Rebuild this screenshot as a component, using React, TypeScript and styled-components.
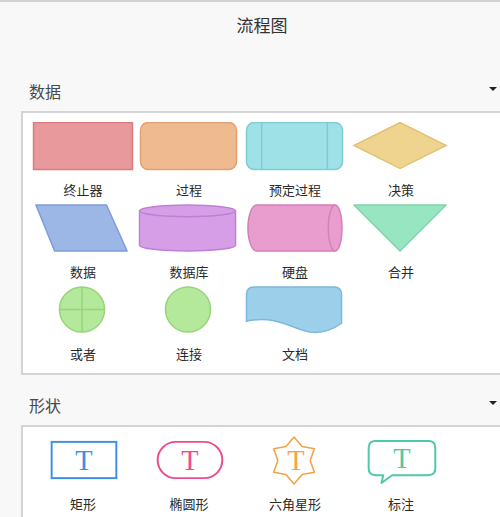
import React from 'react';
import styled, { createGlobalStyle } from 'styled-components';

const GlobalStyle = createGlobalStyle`
  html, body {
    margin: 0;
    padding: 0;
    background: #f8f8f8;
    overflow: hidden;
  }
`;

const Page = styled.div`
  width: 500px;
  border-top: 2px solid #d2d2d2;
  background: #f8f8f8;
  font-family: "Noto Sans CJK SC", "Noto Sans", sans-serif;
`;

// the window cuts the sidebar on the right, so the title sits a bit right of centre
const Title = styled.div`
  height: 56px;
  padding: 3px 0 0 24px;
  text-align: center;
  line-height: 40px;
  font-size: 17px;
  color: #333;
`;

const SectionHeader = styled.div`
  height: 50px;
  padding: 0 3px 9px 29px;
  display: flex;
  align-items: flex-end;
  justify-content: space-between;
  box-sizing: border-box;
`;

const SectionName = styled.span`
  font-size: 16px;
  line-height: 22px;
  color: #4a4a4a;
`;

const Caret = styled.span`
  width: 0;
  height: 0;
  border-left: 4px solid transparent;
  border-right: 4px solid transparent;
  border-top: 4px solid #222;
  margin-bottom: 11px;
`;

const Panel = styled.div<{ $pad: string }>`
  margin-left: 21px;
  background: #fff;
  border: 2px solid #d4d4d4;
  border-right: none;
  padding: ${(p) => p.$pad};
  display: grid;
  grid-template-columns: repeat(4, 106px);
`;

const Cell = styled.div`
  display: flex;
  flex-direction: column;
  align-items: center;
  height: 82px;
`;

const Label = styled.div`
  padding-top: 5px;
  line-height: 28px;
  font-size: 13px;
  color: #2a2a2a;
  text-align: center;
  width: 106px;
`;

const ShapeSvg = styled.svg`
  display: block;
  width: 106px;
  height: 50px;
`;

const TGlyph = styled.text`
  font-family: "Liberation Serif", "DejaVu Serif", serif;
  font-size: 29px;
`;

type Shape = { label: string; draw: React.ReactNode };

const sw = 1.5;

const flowShapes: Shape[] = [
  {
    label: '终止器',
    draw: <rect x={2.5} y={0.5} width={101} height={48} fill="#e8999b" stroke="#d97b7e" strokeWidth={sw} />,
  },
  {
    label: '过程',
    draw: <rect x={3.5} y={0.5} width={98} height={48} rx={8} fill="#f0ba90" stroke="#e2a172" strokeWidth={sw} />,
  },
  {
    label: '预定过程',
    draw: (
      <g fill="none" stroke="#7fcad3" strokeWidth={sw}>
        <rect x={3.5} y={0.5} width={98} height={48} rx={8} fill="#9ee2e8" />
        <line x1={19} y1={1} x2={19} y2={48} />
        <line x1={86} y1={1} x2={86} y2={48} />
      </g>
    ),
  },
  {
    label: '决策',
    draw: <path d="M52,0.5 L99,24 L52,47.5 L5,24 Z" fill="#efd48f" stroke="#e1c274" strokeWidth={sw} />,
  },
  {
    label: '数据',
    draw: (
      <path d="M5,1 H77 L98,48 H24 Z" fill="#9cb6e6" stroke="#7e9cd9" strokeWidth={sw} strokeLinejoin="round" />
    ),
  },
  {
    label: '数据库',
    draw: (
      <g stroke="#c07fd3" strokeWidth={sw} fill="#d59ee7">
        <path d="M2.5,7 A49,6 0 0 1 100.5,7 V42 A49,6 0 0 1 2.5,42 Z" />
        <path d="M2.5,7 A49,6 0 0 0 100.5,7" fill="none" />
      </g>
    ),
  },
  {
    label: '硬盘',
    draw: (
      <g stroke="#d47fb8" strokeWidth={sw} fill="#e99dcf">
        <path d="M14,1 H94 A7,23.5 0 0 1 94,48 H14 A9,23.5 0 0 1 14,1 Z" />
        <path d="M94,1 A7,23.5 0 0 0 94,48" fill="none" />
      </g>
    ),
  },
  {
    label: '合并',
    draw: (
      <path d="M5,1 H99 L52,48 Z" fill="#98e6c1" stroke="#80d4a9" strokeWidth={sw} strokeLinejoin="round" />
    ),
  },
  {
    label: '或者',
    draw: (
      <g stroke="#98d47c" strokeWidth={sw} fill="#b4e89b">
        <circle cx={52} cy={24} r={23} />
        <line x1={52} y1={1} x2={52} y2={47} />
        <line x1={29} y1={24} x2={75} y2={24} />
      </g>
    ),
  },
  {
    label: '连接',
    draw: <circle cx={52} cy={24} r={23} fill="#b4e89b" stroke="#98d47c" strokeWidth={sw} />,
  },
  {
    label: '文档',
    draw: (
      <path
        d="M3.5,9 Q3.5,1 11,1 H93 Q100.5,1 100.5,9 V38 C92,44 82,49 68,47 C50,44 34,29 3.5,36 Z"
        fill="#9ccfea"
        stroke="#7db7dc"
        strokeWidth={sw}
      />
    ),
  },
];

const starPoints = (() => {
  const pts: string[] = [];
  for (let i = 0; i < 12; i++) {
    const a = (-90 + i * 30) * (Math.PI / 180);
    const r = i % 2 === 0 ? 24 : 16.5;
    pts.push(`${(52 + r * Math.cos(a)).toFixed(2)},${(25 + r * Math.sin(a)).toFixed(2)}`);
  }
  return pts.join(' ');
})();

const basicShapes: { label: string; color: string; draw: React.ReactNode; ty: number }[] = [
  {
    label: '矩形',
    color: '#3d8ee6',
    ty: 35,
    draw: <rect x={21} y={6} width={66} height={37} fill="none" stroke="#3d8ee6" strokeWidth={2} />,
  },
  {
    label: '椭圆形',
    color: '#ee4b8e',
    ty: 35,
    draw: <rect x={21} y={6} width={66} height={37} rx={18.5} fill="none" stroke="#ee4b8e" strokeWidth={2} />,
  },
  {
    label: '六角星形',
    color: '#f5a347',
    ty: 35,
    draw: <polygon points={starPoints} fill="none" stroke="#f5a347" strokeWidth={1.6} strokeLinejoin="round" />,
  },
  {
    label: '标注',
    color: '#4cc9a9',
    ty: 33,
    draw: (
      <path
        d="M27,5 H81 Q88,5 88,12 V33 Q88,40 81,40 H44 L33,48 L35,40 H27 Q20,40 20,33 V12 Q20,5 27,5 Z"
        fill="none"
        stroke="#4cc9a9"
        strokeWidth={2}
        strokeLinejoin="round"
      />
    ),
  },
];

const App: React.FC = () => {
  return (
    <Page>
      <GlobalStyle />
      <Title>流程图</Title>
      <SectionHeader>
        <SectionName>数据</SectionName>
        <Caret />
      </SectionHeader>
      <Panel $pad="9px 0 5px 7px">
        {flowShapes.map((s) => (
          <Cell key={s.label}>
            <ShapeSvg viewBox="0 0 106 50">{s.draw}</ShapeSvg>
            <Label>{s.label}</Label>
          </Cell>
        ))}
      </Panel>
      <SectionHeader>
        <SectionName>形状</SectionName>
        <Caret />
      </SectionHeader>
      <Panel $pad="9px 0 10px 7px">
        {basicShapes.map((s) => (
          <Cell key={s.label}>
            <ShapeSvg viewBox="0 0 106 50">
              {s.draw}
              <TGlyph x={54} y={s.ty} textAnchor="middle" fill={s.color}>
                T
              </TGlyph>
            </ShapeSvg>
            <Label>{s.label}</Label>
          </Cell>
        ))}
      </Panel>
    </Page>
  );
};

export default App;
